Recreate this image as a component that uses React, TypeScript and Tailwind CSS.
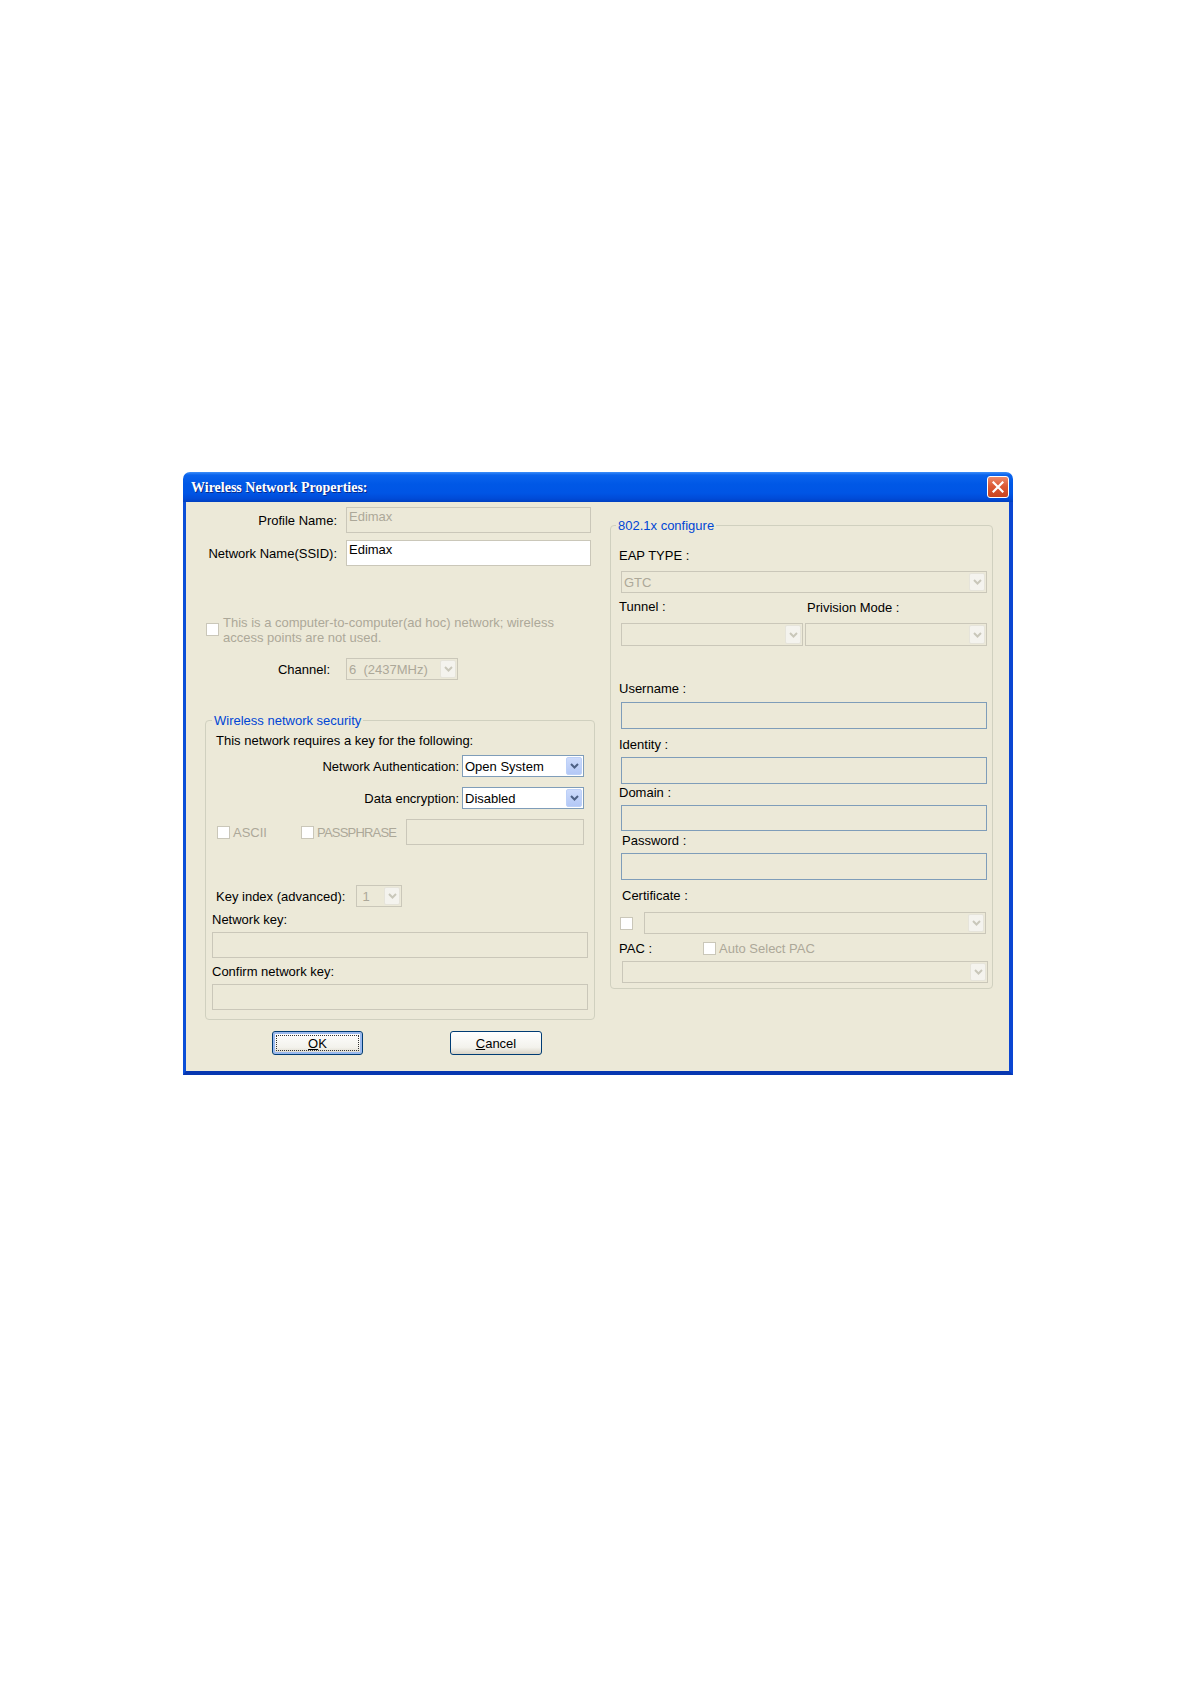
import type { ReactNode } from 'react';

function Chevron({ enabled }: { enabled: boolean }) {
  return (
    <svg width="9" height="6" viewBox="0 0 9 6">
      <path d="M1 1l3.5 3.5L8 1" fill="none" stroke={enabled ? '#4d6185' : '#c9c7ba'} strokeWidth="2" />
    </svg>
  );
}

function Checkbox() {
  return <span className="w-[13px] h-[13px] border border-[#cac7b9] bg-white shrink-0" />;
}

function Combo({ value, enabled = false, className = '' }: { value?: string; enabled?: boolean; className?: string }) {
  return (
    <div
      className={`flex items-stretch border ${
        enabled ? 'border-[#7f9db9] bg-white' : 'border-[#cac7b9] bg-[#ece9d8]'
      } ${className}`}
    >
      <div className={`flex-1 flex items-center pl-[2px] whitespace-pre ${enabled ? 'text-black' : 'text-[#aca899]'}`}>
        {value}
      </div>
      <div
        className={`w-[16px] m-px flex items-center justify-center rounded-[2px] border ${
          enabled
            ? 'border-[#bcd0f8] bg-[linear-gradient(to_bottom,#cddbfb,#b3c8f6)]'
            : 'border-[#e6e4da] bg-[#f4f3ee]'
        }`}
      >
        <Chevron enabled={enabled} />
      </div>
    </div>
  );
}

function Field({ className = '', children }: { className?: string; children?: ReactNode }) {
  return <div className={`border ${className}`}>{children}</div>;
}

function Group({ title, className = '', legendClass = '', children }: { title: string; className?: string; legendClass?: string; children: ReactNode }) {
  return (
    <fieldset className={`border border-[#d0d0bf] rounded-[4px] ${className}`}>
      <legend className={`px-[2px] text-[#0046d5] ${legendClass}`}>{title}</legend>
      {children}
    </fieldset>
  );
}

export default function App() {
  return (
    <div className="min-h-[1685px] bg-white pt-[472px] pl-[183px] font-['Liberation_Sans',Arial,sans-serif] text-[13px] leading-[15px] text-black">
      <div className="w-[830px] h-[603px] flex flex-col">
        {/* title bar */}
        <div className="h-[30px] shrink-0 rounded-t-[7px] flex items-center pl-[8px] pr-[4px] bg-[linear-gradient(to_bottom,#3d8ff9_0%,#0a63ed_10%,#0058e6_40%,#0055e5_70%,#004ad6_90%,#003fbf_100%)]">
          <span className="flex-1 text-white text-[14px] font-bold font-['Liberation_Serif',serif] [text-shadow:1px_1px_#0a2a8a]">
            Wireless Network Properties:
          </span>
          <div className="w-[22px] h-[22px] rounded-[3px] border border-white flex items-center justify-center bg-[linear-gradient(to_bottom,#ec8a6c,#dc5a36_45%,#c9431f)]">
            <svg width="12" height="12" viewBox="0 0 12 12">
              <path d="M1.5 1.5l9 9M10.5 1.5l-9 9" stroke="white" strokeWidth="2.2" strokeLinecap="square" />
            </svg>
          </div>
        </div>

        {/* body */}
        <div className="flex-1 flex bg-[#ece9d8] border-l-[3px] border-r-[4px] border-b-[4px] border-l-[#0b4fd8] border-r-[#0b46d2] border-b-[#0737b0]">
          {/* left column */}
          <div className="w-[424px] flex flex-col">
            <div className="mt-[5px] flex items-center">
              <span className="w-[151px] text-right">Profile Name:</span>
              <Field className="ml-[9px] w-[245px] h-[26px] border-[#cac7b9] bg-[#ece9d8] pl-[2px] pt-[1px] text-[#aca899]">
                Edimax
              </Field>
            </div>
            <div className="mt-[7px] flex items-center">
              <span className="w-[151px] text-right">Network Name(SSID):</span>
              <Field className="ml-[9px] w-[245px] h-[26px] border-[#cac7b9] bg-white pl-[2px] pt-[1px]">Edimax</Field>
            </div>

            <div className="mt-[49px] flex items-start pl-[20px]">
              <span className="mt-[8px] flex">
                <Checkbox />
              </span>
              <span className="ml-[4px] text-[#aca899]">
                This is a computer-to-computer(ad hoc) network; wireless
                <br />
                access points are not used.
              </span>
            </div>

            <div className="mt-[13px] flex items-center">
              <span className="w-[144px] text-right">Channel:</span>
              <Combo value="6  (2437MHz)" className="ml-[16px] w-[112px] h-[22px]" />
            </div>

            <Group title="Wireless network security" className="mt-[33px] ml-[19px] w-[390px] pl-[6px] pb-[9px]">
              <div className="mt-[5px] ml-[4px]">This network requires a key for the following:</div>
              <div className="mt-[7px] flex items-center">
                <span className="w-[247px] text-right">Network Authentication:</span>
                <Combo value="Open System" enabled className="ml-[3px] w-[122px] h-[22px]" />
              </div>
              <div className="mt-[10px] flex items-center">
                <span className="w-[247px] text-right">Data encryption:</span>
                <Combo value="Disabled" enabled className="ml-[3px] w-[122px] h-[22px]" />
              </div>
              <div className="mt-[10px] h-[26px] flex items-center">
                <span className="ml-[5px] w-[84px] flex items-center">
                  <Checkbox />
                  <span className="ml-[3px] text-[#aca899]">ASCII</span>
                </span>
                <span className="w-[105px] flex items-center">
                  <Checkbox />
                  <span className="ml-[3px] tracking-[-0.8px] text-[#aca899]">PASSPHRASE</span>
                </span>
                <Field className="w-[178px] h-[26px] border-[#cac7b9] bg-[#ece9d8]" />
              </div>
              <div className="mt-[40px] flex items-center">
                <span className="ml-[4px] w-[140px]">Key index (advanced):</span>
                <Combo value=" 1" className="w-[46px] h-[22px]" />
              </div>
              <div className="mt-[5px]">Network key:</div>
              <Field className="mt-[5px] w-[376px] h-[26px] border-[#cac7b9] bg-[#ece9d8]" />
              <div className="mt-[6px]">Confirm network key:</div>
              <Field className="mt-[5px] w-[376px] h-[26px] border-[#cac7b9] bg-[#ece9d8]" />
            </Group>

            <div className="mt-[11px] flex">
              <button className="ml-[86px] w-[91px] h-[24px] p-[3px] rounded-[3px] border border-[#003c74] bg-[linear-gradient(to_bottom,#ffffff,#f3f2ec_70%,#d9d4c6)] shadow-[inset_0_0_0_2px_#9ab9ee]">
                <span className="h-full flex items-center justify-center border border-dotted border-[#333]">
                  <span className="underline">O</span>K
                </span>
              </button>
              <button className="ml-[87px] w-[92px] h-[24px] rounded-[3px] border border-[#003c74] bg-[linear-gradient(to_bottom,#ffffff,#f3f2ec_70%,#d9d4c6)] flex items-center justify-center">
                <span className="underline">C</span>ancel
              </button>
            </div>
          </div>

          {/* right column */}
          <div className="w-[383px] flex flex-col">
            <Group title="802.1x configure" className="mt-[16px] w-[383px] pl-[8px] pb-[5px]" legendClass="ml-[-3px]">
              <div className="mt-[15px]">EAP TYPE :</div>
              <Combo value="GTC" className="mt-[8px] ml-[2px] w-[366px] h-[22px]" />
              <div className="mt-[6px] flex">
                <span className="w-[188px]">Tunnel :</span>
                <span className="mt-[1px]">Privision Mode :</span>
              </div>
              <div className="mt-[8px] ml-[2px] flex gap-[2px]">
                <Combo className="w-[182px] h-[23px]" />
                <Combo className="w-[182px] h-[23px]" />
              </div>
              <div className="mt-[35px]">Username :</div>
              <Field className="mt-[6px] ml-[2px] w-[366px] h-[27px] border-[#7f9db9]" />
              <div className="mt-[8px]">Identity :</div>
              <Field className="mt-[5px] ml-[2px] w-[366px] h-[27px] border-[#7f9db9]" />
              <div className="mt-[1px]">Domain :</div>
              <Field className="mt-[5px] ml-[2px] w-[366px] h-[26px] border-[#7f9db9]" />
              <div className="mt-[2px] ml-[3px]">Password :</div>
              <Field className="mt-[5px] ml-[2px] w-[366px] h-[27px] border-[#7f9db9]" />
              <div className="mt-[8px] ml-[3px]">Certificate :</div>
              <div className="mt-[9px] h-[22px] flex items-center">
                <span className="ml-[1px] flex">
                  <Checkbox />
                </span>
                <Combo className="ml-[11px] w-[342px] h-[22px]" />
              </div>
              <div className="mt-[6px] h-[16px] flex items-center">
                <span className="w-[84px]">PAC :</span>
                <Checkbox />
                <span className="ml-[3px] text-[#aca899]">Auto Select PAC</span>
              </div>
              <Combo className="mt-[5px] ml-[3px] w-[366px] h-[22px]" />
            </Group>
          </div>
        </div>
      </div>
    </div>
  );
}
